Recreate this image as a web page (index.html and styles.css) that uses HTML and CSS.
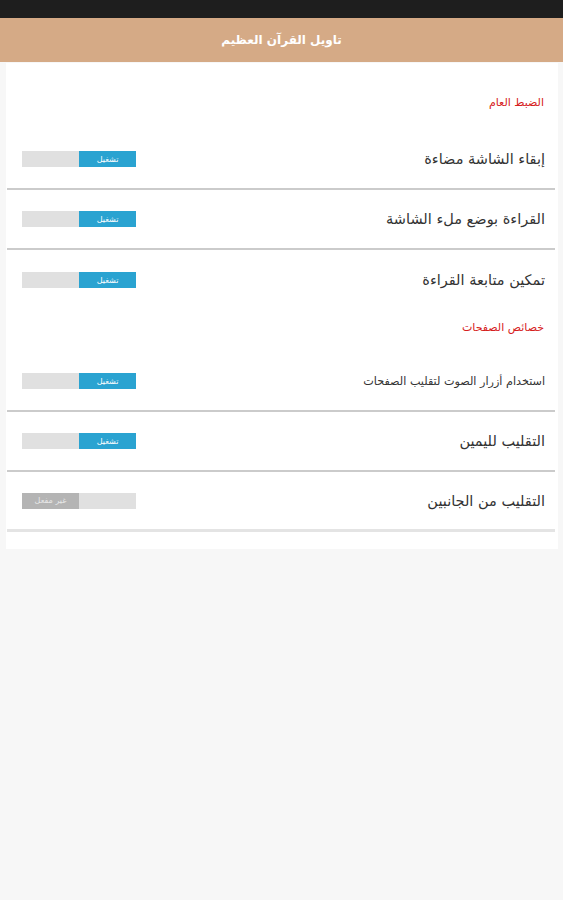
FILE: index.html
```html
<!DOCTYPE html>
<html lang="ar">
<head>
    <meta charset="UTF-8">
    <meta name="viewport" content="width=device-width, initial-scale=1.0">
    <title>تاويل القرآن العظيم</title>
    <link rel="stylesheet" href="styles.css">
</head>
<body>

<div id="status-bar"></div>

<header id="app-bar">
    <h1>تاويل القرآن العظيم</h1>
</header>

<main id="settings">
    <section class="group">
        <h2 class="section-title">الضبط العام</h2>
        <div class="row">
            <span class="label">إبقاء الشاشة مضاءة</span>
            <span class="toggle on"><span class="track"></span><span class="knob">تشغيل</span></span>
        </div>
        <div class="row">
            <span class="label">القراءة بوضع ملء الشاشة</span>
            <span class="toggle on"><span class="track"></span><span class="knob">تشغيل</span></span>
        </div>
        <div class="row no-line">
            <span class="label">تمكين متابعة القراءة</span>
            <span class="toggle on"><span class="track"></span><span class="knob">تشغيل</span></span>
        </div>
    </section>

    <section class="group">
        <h2 class="section-title">خصائص الصفحات</h2>
        <div class="row">
            <span class="label small">استخدام أزرار الصوت لتقليب الصفحات</span>
            <span class="toggle on"><span class="track"></span><span class="knob">تشغيل</span></span>
        </div>
        <div class="row">
            <span class="label">التقليب لليمين</span>
            <span class="toggle on"><span class="track"></span><span class="knob">تشغيل</span></span>
        </div>
        <div class="row last">
            <span class="label">التقليب من الجانبين</span>
            <span class="toggle off"><span class="knob">غير مفعل</span><span class="track"></span></span>
        </div>
    </section>
</main>

</body>
</html>
```

FILE: styles.css
```css
* {
  box-sizing: border-box;
  margin: 0;
  padding: 0;
}

html, body {
  width: 100%;
  height: 100%;
  background: #f7f7f7;
  font-family: "DejaVu Sans", "Noto Sans", sans-serif;
  direction: rtl;
}

#status-bar {
  height: 18px;
  background: #1e1e1e;
}

#app-bar {
  height: 44px;
  background: #d5aa86;
  display: flex;
  align-items: center;
  justify-content: center;
}

#app-bar h1 {
  color: white;
  font-size: 12px;
  font-weight: bold;
}

#settings {
  background: white;
  margin: 1px 5px 0 6px;
  padding: 24px 0 17px;
}

.section-title {
  color: #d62020;
  font-size: 11px;
  font-weight: normal;
  line-height: 16px;
  padding: 10px 14px 16px;
}

.group:first-child .section-title {
  padding-top: 8px;
  padding-bottom: 19px;
}

.row {
  height: 60px;
  margin: 0 3px 0 1px;
  padding: 0 10px 0 15px;
  display: flex;
  align-items: center;
  justify-content: space-between;
  border-bottom: 2px solid #cbcbcb;
}

.row.no-line {
  border-bottom: none;
}

.row.last {
  border-bottom: 3px solid #e4e4e4;
}

.label {
  font-size: 14.5px;
  color: #333;
}

.label.small {
  font-size: 11.2px;
}

.toggle {
  direction: ltr;
  display: flex;
  width: 114px;
  height: 16px;
}

.toggle .track,
.toggle .knob {
  flex: 1;
}

.toggle .track {
  background: #e0e0e0;
}

.toggle .knob {
  display: flex;
  align-items: center;
  justify-content: center;
  direction: rtl;
  font-size: 8px;
  color: white;
}

.toggle.on .knob {
  background: #2aa3d1;
}

.toggle.off .knob {
  background: #b4b4b4;
  color: #e8e8e8;
}
```
